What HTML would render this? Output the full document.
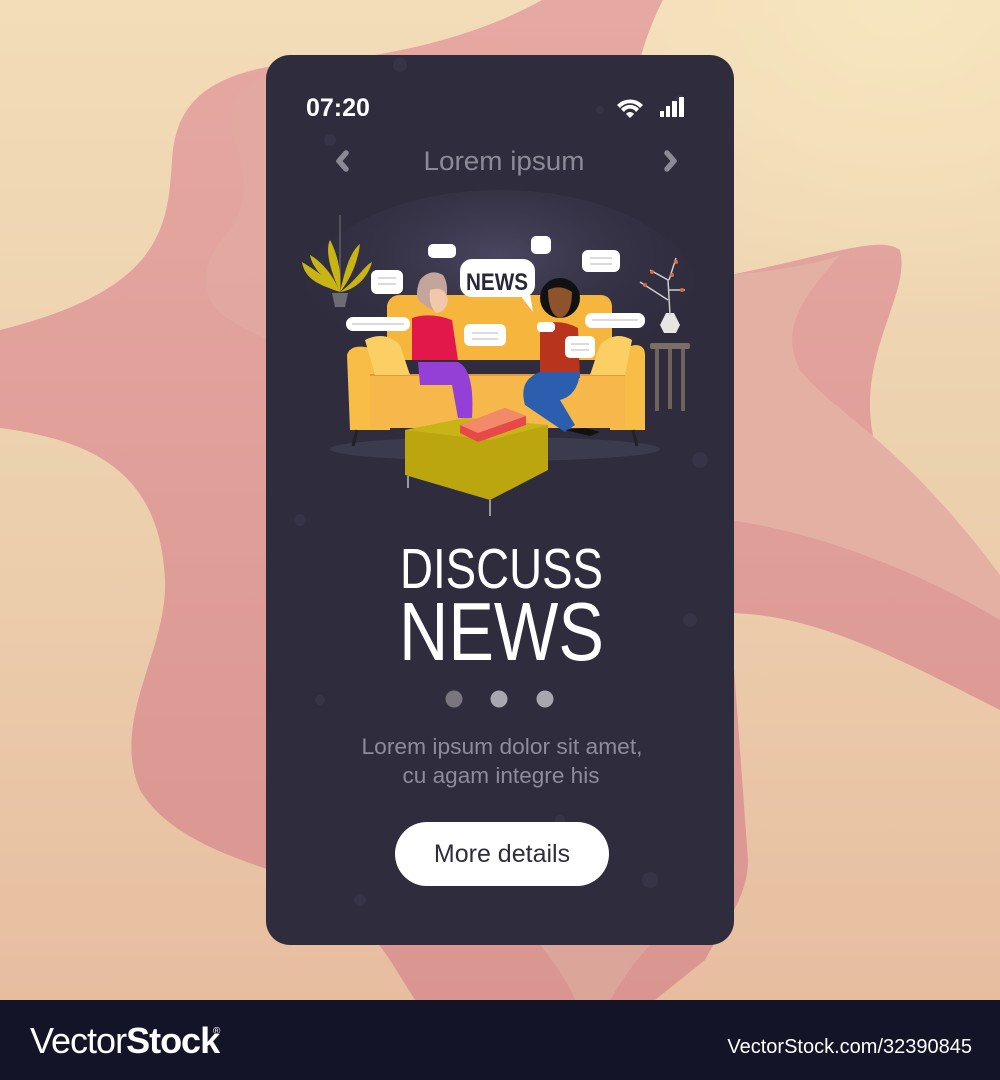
<!DOCTYPE html>
<html><head><meta charset="utf-8"><style>
html,body{margin:0;padding:0;width:1000px;height:1080px;overflow:hidden;background:#ecc9a6}
svg{display:block}
text{font-family:"Liberation Sans",sans-serif}
</style></head><body>
<svg width="1000" height="1080" viewBox="0 0 1000 1080" xmlns="http://www.w3.org/2000/svg">
<defs>
<radialGradient id="glow" cx="0.5" cy="0.3" r="0.6"><stop offset="0" stop-color="#4a4660"/><stop offset="1" stop-color="#2f2c3e" stop-opacity="0"/></radialGradient>
<linearGradient id="bg" x1="0" y1="0" x2="0" y2="1"><stop offset="0" stop-color="#f3dcb8"/><stop offset="0.5" stop-color="#ecd0ae"/><stop offset="1" stop-color="#e7bda0"/></linearGradient>
<linearGradient id="pk" x1="0" y1="0" x2="0" y2="1"><stop offset="0" stop-color="#e6a8a2"/><stop offset="1" stop-color="#da9590"/></linearGradient>
<radialGradient id="tr" cx="0.8" cy="0" r="0.8"><stop offset="0" stop-color="#f6e6be"/><stop offset="1" stop-color="#f6e6be" stop-opacity="0"/></radialGradient>
</defs>
<rect width="1000" height="1000" fill="url(#bg)"/>
<rect x="500" y="0" width="500" height="400" fill="url(#tr)"/>
<!-- main pink blob -->
<path d="M542 0 C470 40 380 60 267 67 C200 80 175 110 172 160 C168 230 160 290 0 330 L0 428 C90 440 160 470 165 580 C168 650 110 720 140 790 C170 840 240 860 300 880 C340 900 370 930 390 960 L415 1000 L655 1000 L705 960 C720 930 748 900 748 860 L730 613 C820 615 900 660 1000 710 L1000 575 C930 545 875 500 870 410 C868 340 910 290 900 250 C880 235 830 255 730 275 L640 60 C645 40 655 15 663 0 Z" fill="url(#pk)"/>
<!-- lighter inner areas -->
<path d="M730 275 C790 270 830 260 840 255 C800 300 780 330 800 370 C830 410 900 440 1000 575 L1000 620 C900 560 800 530 730 520 Z" fill="#e5b0a4"/>
<path d="M267 75 C240 85 225 105 232 130 C245 170 250 200 230 230 C200 260 195 300 230 320 C245 330 260 335 267 340 Z" fill="#e3aaa0" opacity="0.7"/>
<path d="M540 945 C560 970 572 990 575 1000 L610 1000 C625 975 640 955 650 945 Z" fill="#dca59a"/>
<!-- phone -->
<rect x="266" y="55" width="468" height="890" rx="24" fill="#2f2c3e"/>
<ellipse cx="500" cy="300" rx="200" ry="110" fill="url(#glow)"/>
<g fill="#3a374b" opacity="0.7">
<circle cx="400" cy="65" r="7"/><circle cx="680" cy="100" r="5"/><circle cx="330" cy="140" r="6"/><circle cx="600" cy="110" r="4"/><circle cx="700" cy="460" r="8"/><circle cx="300" cy="520" r="6"/><circle cx="690" cy="620" r="7"/><circle cx="320" cy="700" r="5"/><circle cx="650" cy="880" r="8"/><circle cx="360" cy="900" r="6"/><circle cx="560" cy="820" r="5"/>
</g>
<!-- status -->
<text x="306" y="116" font-size="25" font-weight="bold" fill="#fff">07:20</text>
<path d="M617 105 a18 18 0 0 1 26 0 l-3 3 a13 13 0 0 0 -20 0z M621 109 a12 12 0 0 1 18 0 l-3 3 a7 7 0 0 0 -12 0z M626 114 a5 5 0 0 1 8 0 l-4 4z" fill="#fff"/>
<rect x="660" y="111" width="4" height="6" fill="#fff"/><rect x="666" y="106" width="4" height="11" fill="#fff"/><rect x="672" y="101" width="5" height="16" fill="#fff"/><rect x="679" y="97" width="5" height="20" fill="#fff"/>
<path d="M346 153 l-7 8 l7 8" stroke="#8d8a98" stroke-width="5.5" fill="none" stroke-linecap="round" stroke-linejoin="round"/>
<path d="M667 153 l7 8 l-7 8" stroke="#8d8a98" stroke-width="5.5" fill="none" stroke-linecap="round" stroke-linejoin="round"/>
<text x="504" y="170" font-size="27" fill="#8d8a98" text-anchor="middle" textLength="161" lengthAdjust="spacingAndGlyphs">Lorem ipsum</text>
<!-- illustration -->
<ellipse cx="495" cy="449" rx="165" ry="12" fill="#3c3a4d"/>
<line x1="340" y1="215" x2="340" y2="290" stroke="#777" stroke-width="1"/>
<path d="M332 293 h16 l-3 14 h-10z" fill="#6c6c75"/>
<g fill="#c8b413"><path d="M340 292 C320 285 305 280 302 262 C315 270 330 280 340 292z"/><path d="M340 292 C330 270 325 250 330 240 C338 255 342 275 340 292z"/><path d="M340 292 C345 270 350 252 360 244 C358 262 350 280 340 292z"/><path d="M340 292 C355 282 365 265 372 262 C368 278 355 290 340 292z"/><path d="M340 292 C325 280 312 268 310 255 C322 262 333 275 340 292z"/></g>
<rect x="650" y="343" width="40" height="6" rx="2" fill="#7a6e66"/><rect x="655" y="349" width="4" height="62" fill="#6e645d"/><rect x="681" y="349" width="4" height="62" fill="#6e645d"/><rect x="668" y="349" width="4" height="60" fill="#6e645d"/>
<path d="M660 325 l6 -12 h8 l6 12 l-4 8 h-12z" fill="#e8e6e3"/>
<path d="M670 315 L668 280 L650 270 M668 290 L685 290 M669 280 L676 258 M668 300 L640 282" stroke="#ccc" stroke-width="1.5" fill="none"/>
<g fill="#e06a3a"><circle cx="676" cy="262" r="2"/><circle cx="682" cy="290" r="2"/><circle cx="652" cy="272" r="2"/><circle cx="645" cy="285" r="2"/><circle cx="672" cy="275" r="2"/></g>
<path d="M387 305 Q390 295 400 295 H600 Q610 295 612 305 V360 H387Z" fill="#f6b63e"/>
<path d="M347 355 Q350 345 365 347 L390 350 V430 H350Z" fill="#f8bd46"/>
<path d="M612 350 L635 345 Q645 345 645 355 V430 H610Z" fill="#f8bd46"/>
<path d="M370 375 H625 V428 H370Z" fill="#f6b84a"/>
<path d="M370 375 H625" stroke="#e59a35" stroke-width="2"/>
<path d="M365 340 Q385 330 400 345 L410 375 H375z" fill="#fbcf63"/>
<path d="M600 345 Q615 330 632 340 L625 375 H590z" fill="#fbcf63"/>
<line x1="357" y1="430" x2="353" y2="446" stroke="#222" stroke-width="3"/><line x1="633" y1="430" x2="637" y2="446" stroke="#222" stroke-width="3"/>
<path d="M420 280 Q430 268 443 275 Q450 285 445 305 Q435 315 425 305 Q412 300 420 280z" fill="#c4a59b"/>
<path d="M430 290 Q445 285 448 300 Q446 312 436 313 Q428 305 430 290z" fill="#f2c7aa"/>
<path d="M412 318 Q430 312 452 320 L458 360 H412z" fill="#e2174a"/>
<path d="M418 362 H458 Q475 370 472 418 H458 L452 385 H420z" fill="#9440d6"/>
<circle cx="560" cy="298" r="20" fill="#111"/>
<path d="M548 290 Q560 284 572 292 Q572 315 560 318 Q548 315 548 290z" fill="#8e532b"/>
<path d="M540 325 Q560 318 578 328 L580 378 H540z" fill="#b9341d"/>
<path d="M540 372 H580 Q578 395 560 400 L575 425 L565 432 L525 405 Q518 380 540 372z" fill="#2c5eb0"/>
<path d="M565 430 L585 428 L600 432 L590 436 Z" fill="#111"/>
<path d="M405 430 L465 418 L548 425 L548 470 L490 500 L405 475 Z" fill="#bba60f"/>
<path d="M405 430 L465 418 L548 425 L490 440 Z" fill="#c9b418"/>
<line x1="490" y1="500" x2="490" y2="516" stroke="#999" stroke-width="2"/><line x1="408" y1="476" x2="408" y2="488" stroke="#999" stroke-width="2"/>
<path d="M460 425 L505 408 L526 416 L526 425 L478 442 L460 433z" fill="#e84848"/><path d="M460 425 L505 408 L526 416 L478 433z" fill="#f28a6a"/>
<g fill="#fff">
<rect x="460" y="259" width="75" height="38" rx="12"/><path d="M520 295 L533 312 L530 294z"/>
<rect x="371" y="270" width="32" height="24" rx="6"/><rect x="346" y="317" width="64" height="14" rx="7"/>
<rect x="428" y="244" width="28" height="14" rx="5"/><rect x="531" y="236" width="20" height="18" rx="5"/>
<rect x="582" y="250" width="38" height="22" rx="6"/><rect x="585" y="313" width="60" height="15" rx="7"/>
<rect x="464" y="324" width="42" height="22" rx="6"/><rect x="565" y="336" width="30" height="22" rx="5"/><rect x="537" y="322" width="18" height="10" rx="4"/>
</g>
<g stroke="#cfcfd4" stroke-width="1.5"><line x1="378" y1="278" x2="396" y2="278"/><line x1="378" y1="284" x2="396" y2="284"/><line x1="352" y1="324" x2="404" y2="324"/><line x1="590" y1="258" x2="612" y2="258"/><line x1="590" y1="264" x2="612" y2="264"/><line x1="592" y1="320" x2="638" y2="320"/><line x1="472" y1="333" x2="498" y2="333"/><line x1="472" y1="339" x2="498" y2="339"/><line x1="571" y1="344" x2="589" y2="344"/><line x1="571" y1="350" x2="589" y2="350"/></g>
<text x="497" y="290" font-size="24" font-weight="bold" fill="#2a2838" text-anchor="middle" textLength="62" lengthAdjust="spacingAndGlyphs">NEWS</text>
<text x="400" y="588" font-size="57" fill="#fff" textLength="203" lengthAdjust="spacingAndGlyphs">DISCUSS</text>
<text x="399" y="660" font-size="83" fill="#fff" textLength="205" lengthAdjust="spacingAndGlyphs">NEWS</text>
<circle cx="454" cy="699" r="8.5" fill="#79767f"/><circle cx="499" cy="699" r="8.5" fill="#a8a6b0"/><circle cx="545" cy="699" r="8.5" fill="#a8a6b0"/>
<text x="502" y="754" font-size="22" fill="#8e8b9a" text-anchor="middle" textLength="281" lengthAdjust="spacingAndGlyphs">Lorem ipsum dolor sit amet,</text>
<text x="501" y="783" font-size="22" fill="#8e8b9a" text-anchor="middle" textLength="197" lengthAdjust="spacingAndGlyphs">cu agam integre his</text>
<rect x="395" y="822" width="214" height="64" rx="32" fill="#fff"/>
<text x="502" y="862" font-size="25" fill="#2f2c3e" text-anchor="middle">More details</text>
<rect x="0" y="1000" width="1000" height="80" fill="#131427"/>
<text x="30" y="1053" font-size="36" fill="#fff" letter-spacing="-1">Vector<tspan font-weight="bold">Stock</tspan></text>
<text x="213" y="1034" font-size="10" fill="#fff">®</text>
<text x="972" y="1053" font-size="20" fill="#fff" text-anchor="end">VectorStock.com/32390845</text>
</svg>
</body></html>
